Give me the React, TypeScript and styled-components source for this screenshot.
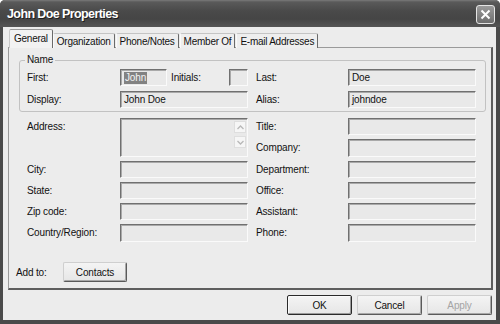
import React from "react";
import styled, { createGlobalStyle } from "styled-components";

const GlobalStyle = createGlobalStyle`
  html, body {
    margin: 0;
    padding: 0;
    background: #ffffff;
  }
  body {
    font-family: "Liberation Sans", Arial, sans-serif;
    font-size: 10px;
    letter-spacing: -0.15px;
    color: #111;
  }
`;

const Window = styled.div`
  width: 500px;
  height: 324px;
  display: flex;
  flex-direction: column;
  background: #4a4a4a;
  border-radius: 5px 5px 0 0;
  overflow: hidden;
  box-sizing: border-box;
`;

const TitleBar = styled.div`
  height: 27px;
  flex: none;
  display: flex;
  align-items: center;
  justify-content: space-between;
  padding: 0 5px 0 7px;
  background: linear-gradient(#7a7a7a 0, #5a5a5a 2px, #4a4a4a 40%, #454545 70%, #555 100%);
`;

const Title = styled.div`
  color: #fff;
  font-weight: bold;
  font-size: 12.5px;
  letter-spacing: -0.6px;
  text-shadow: 1px 1px 0 #1e1e1e;
`;

const CloseButton = styled.div`
  width: 17px;
  height: 17px;
  margin-top: 1px;
  border: 1px solid #e4e4e4;
  border-radius: 3px;
  background: linear-gradient(#9a9a9a, #6e6e6e);
  display: flex;
  align-items: center;
  justify-content: center;
`;

const Client = styled.div`
  flex: 1;
  margin: 0 4px 4px 3px;
  padding: 4px 3px 5px 5px;
  background: #ececec;
  display: flex;
  flex-direction: column;
`;

const TabStrip = styled.div`
  height: 17px;
  display: flex;
  align-items: flex-end;
  padding-left: 1px;
  margin-bottom: -1px;
  position: relative;
  z-index: 1;
`;

const Tab = styled.div<{ $active?: boolean }>`
  box-sizing: border-box;
  height: ${(p) => (p.$active ? "19px" : "15px")};
  padding: 0 ${(p) => (p.$active ? "4px" : "3px")};
  display: flex;
  align-items: center;
  font-size: 10px;
  letter-spacing: -0.25px;
  background: ${(p) => (p.$active ? "#f2f2f2" : "#eeeeee")};
  border-top: 1px solid ${(p) => (p.$active ? "#9a9a9a" : "#c4c4c4")};
  border-left: 1px solid ${(p) => (p.$active ? "#c8c8c8" : "#fafafa")};
  border-right: 1px solid #6a6a6a;
  border-radius: 2px 2px 0 0;
  margin-right: ${(p) => (p.$active ? "0" : "1px")};
  ${(p) => (p.$active ? "padding-bottom: 2px;" : "")}
`;

const Panel = styled.div`
  flex: 1;
  display: flex;
  flex-direction: column;
  box-sizing: border-box;
  border: 1px solid #9a9a9a;
  border-right: 2px solid #5e5e5e;
  border-bottom: 2px solid #5e5e5e;
  padding: 6px 5px 6px 7px;
  background: #ececec;
`;

const Group = styled.fieldset`
  margin: 0 0 0 3px;
  padding: 3px 7px 3px 7px;
  border: 1px solid #c2c2c2;
  border-radius: 3px;
  min-width: 0;
`;

const Legend = styled.legend`
  font-size: 10px;
  line-height: 12px;
  padding: 0 2px;
  margin-left: -2px;
`;

const FormGrid = styled.div<{ $gap: number; $row?: number }>`
  display: grid;
  grid-template-columns: 93px 128px 100px 128px;
  grid-auto-rows: ${(p) => p.$row ?? 17}px;
  row-gap: ${(p) => p.$gap}px;
`;

const LowerGrid = styled(FormGrid)`
  margin: 6px 0 0 11px;
`;

const Label = styled.div<{ $right?: boolean; $col?: number }>`
  display: flex;
  align-items: center;
  height: 17px;
  padding-left: ${(p) => (p.$right ? "8px" : "0")};
  white-space: nowrap;
  ${(p) => (p.$col ? `grid-column: ${p.$col};` : "")}
`;

const Field = styled.div<{ $w?: number }>`
  box-sizing: border-box;
  width: ${(p) => (p.$w ? `${p.$w}px` : "100%")};
  height: 100%;
  border: 1px solid;
  border-color: #707070 #fafafa #fafafa #707070;
  box-shadow: inset 1px 1px 0 #a9a9a9;
  background: #e9e9e9;
  display: flex;
  align-items: center;
  padding-left: 3px;
  font-size: 10px;
`;

const Selected = styled.span`
  background: #828282;
  color: #f4f4f4;
  padding: 0 1px;
  line-height: 12px;
`;

const Inline = styled.div`
  display: flex;
  align-items: center;
`;

const InlineLabel = styled.div`
  flex: 1;
  padding-left: 4px;
`;

const AreaField = styled(Field)`
  grid-row: span 2;
  align-items: stretch;
  justify-content: flex-end;
  padding: 2px 1px;
`;

const ScrollCol = styled.div`
  display: flex;
  flex-direction: column;
  gap: 3px;
`;

const ArrowBox = styled.div`
  width: 12px;
  height: 12px;
  box-sizing: border-box;
  border: 1px solid #dedede;
  background: #f6f6f6;
  display: flex;
  align-items: center;
  justify-content: center;
`;

const AddRow = styled.div`
  margin-top: auto;
  display: flex;
  align-items: center;
`;

const AddLabel = styled.div`
  width: 47px;
`;

const Button = styled.div<{ $default?: boolean; $disabled?: boolean; $w?: number }>`
  box-sizing: border-box;
  width: ${(p) => p.$w ?? 65}px;
  height: 20px;
  display: flex;
  align-items: center;
  justify-content: center;
  font-size: 10px;
  color: ${(p) => (p.$disabled ? "#a4a4a4" : "#111")};
  background: linear-gradient(#f4f4f4, #e6e6e6);
  border: 1px solid;
  border-color: ${(p) =>
    p.$default ? "#2a2a2a" : "#cfcfcf #5a5a5a #5a5a5a #cfcfcf"};
  border-radius: 2px;
  box-shadow: ${(p) =>
    p.$default
      ? "inset 1px 1px 0 #fafafa, inset -1px -1px 0 #9a9a9a"
      : "inset -1px -1px 0 #a8a8a8"};
`;

const ButtonRow = styled.div`
  display: flex;
  justify-content: flex-end;
  gap: 5px;
  margin-top: 5px;
  padding-right: 1px;
`;

const Chevron = ({ up }: { up?: boolean }) => (
  <svg width="7" height="5" viewBox="0 0 7 5">
    <path
      d={up ? "M0.5 4 L3.5 1 L6.5 4" : "M0.5 1 L3.5 4 L6.5 1"}
      fill="none"
      stroke="#b8b8b8"
      strokeWidth="1.3"
    />
  </svg>
);

const tabs = ["General", "Organization", "Phone/Notes", "Member Of", "E-mail Addresses"];

const rows: [string, string][] = [
  ["City:", "Department:"],
  ["State:", "Office:"],
  ["Zip code:", "Assistant:"],
  ["Country/Region:", "Phone:"],
];

export default function App() {
  return (
    <>
      <GlobalStyle />
      <Window>
        <TitleBar>
          <Title>John Doe Properties</Title>
          <CloseButton>
            <svg width="11" height="11" viewBox="0 0 11 11">
              <path d="M1.5 1.5 L9.5 9.5 M9.5 1.5 L1.5 9.5" stroke="#fff" strokeWidth="2" />
            </svg>
          </CloseButton>
        </TitleBar>
        <Client>
          <TabStrip>
            {tabs.map((t, i) => (
              <Tab key={t} $active={i === 0}>
                {t}
              </Tab>
            ))}
          </TabStrip>
          <Panel>
            <Group>
              <Legend>Name</Legend>
              <FormGrid $gap={5}>
                <Label>First:</Label>
                <Inline>
                  <Field $w={47}>
                    <Selected>John</Selected>
                  </Field>
                  <InlineLabel>Initials:</InlineLabel>
                  <Field $w={19} />
                </Inline>
                <Label $right>Last:</Label>
                <Field>Doe</Field>
                <Label>Display:</Label>
                <Field>John Doe</Field>
                <Label $right>Alias:</Label>
                <Field>johndoe</Field>
              </FormGrid>
            </Group>
            <LowerGrid $gap={4} $row={17.25}>
              <Label>Address:</Label>
              <AreaField>
                <ScrollCol>
                  <ArrowBox>
                    <Chevron up />
                  </ArrowBox>
                  <ArrowBox>
                    <Chevron />
                  </ArrowBox>
                </ScrollCol>
              </AreaField>
              <Label $right>Title:</Label>
              <Field />
              <Label $right $col={3}>Company:</Label>
              <Field />
              {rows.map(([l, r]) => (
                <React.Fragment key={l}>
                  <Label $col={1}>{l}</Label>
                  <Field />
                  <Label $right>{r}</Label>
                  <Field />
                </React.Fragment>
              ))}
            </LowerGrid>
            <AddRow>
              <AddLabel>Add to:</AddLabel>
              <Button $w={64}>Contacts</Button>
            </AddRow>
          </Panel>
          <ButtonRow>
            <Button $default>OK</Button>
            <Button>Cancel</Button>
            <Button $disabled>Apply</Button>
          </ButtonRow>
        </Client>
      </Window>
    </>
  );
}
